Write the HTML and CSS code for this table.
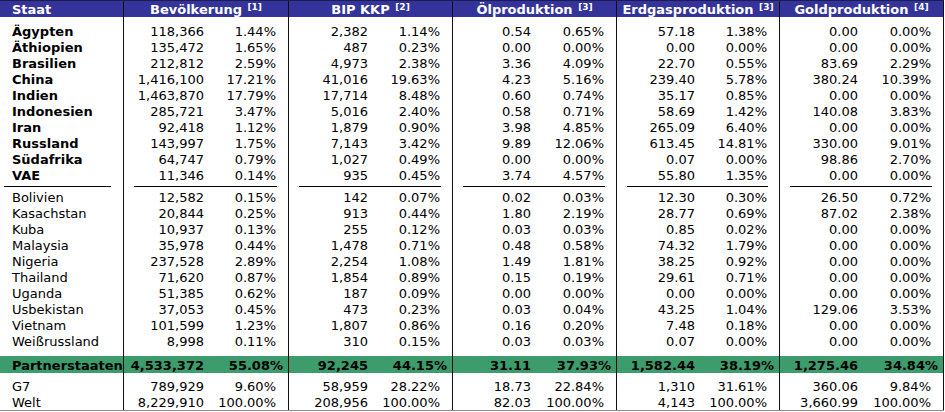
FILE: index.html
```html
<!DOCTYPE html>
<html lang="de">
<head>
<meta charset="utf-8">
<title>Partnerstaaten</title>
<link rel="stylesheet" href="styles.css">
</head>
<body>
<div class="table">
  <div class="row head">
    <span class="s">Staat</span>
    <span class="g">Bevölkerung <sup class="ref">[1]</sup></span>
    <span class="g">BIP KKP <sup class="ref">[2]</sup></span>
    <span class="g">Ölproduktion <sup class="ref">[3]</sup></span>
    <span class="g">Erdgasproduktion <sup class="ref">[3]</sup></span>
    <span class="g">Goldproduktion <sup class="ref">[4]</sup></span>
  </div>
  <div class="row gap gap-top"><span class="s"></span><span class="v"></span><span class="p"></span><span class="v"></span><span class="p"></span><span class="v"></span><span class="p"></span><span class="v"></span><span class="p"></span><span class="v"></span><span class="p"></span></div>

  <div class="row key"><span class="s">Ägypten</span><span class="v">118,366</span><span class="p">1.44%</span><span class="v">2,382</span><span class="p">1.14%</span><span class="v">0.54</span><span class="p">0.65%</span><span class="v">57.18</span><span class="p">1.38%</span><span class="v">0.00</span><span class="p">0.00%</span></div>
  <div class="row key"><span class="s">Äthiopien</span><span class="v">135,472</span><span class="p">1.65%</span><span class="v">487</span><span class="p">0.23%</span><span class="v">0.00</span><span class="p">0.00%</span><span class="v">0.00</span><span class="p">0.00%</span><span class="v">0.00</span><span class="p">0.00%</span></div>
  <div class="row key"><span class="s">Brasilien</span><span class="v">212,812</span><span class="p">2.59%</span><span class="v">4,973</span><span class="p">2.38%</span><span class="v">3.36</span><span class="p">4.09%</span><span class="v">22.70</span><span class="p">0.55%</span><span class="v">83.69</span><span class="p">2.29%</span></div>
  <div class="row key"><span class="s">China</span><span class="v">1,416,100</span><span class="p">17.21%</span><span class="v">41,016</span><span class="p">19.63%</span><span class="v">4.23</span><span class="p">5.16%</span><span class="v">239.40</span><span class="p">5.78%</span><span class="v">380.24</span><span class="p">10.39%</span></div>
  <div class="row key"><span class="s">Indien</span><span class="v">1,463,870</span><span class="p">17.79%</span><span class="v">17,714</span><span class="p">8.48%</span><span class="v">0.60</span><span class="p">0.74%</span><span class="v">35.17</span><span class="p">0.85%</span><span class="v">0.00</span><span class="p">0.00%</span></div>
  <div class="row key"><span class="s">Indonesien</span><span class="v">285,721</span><span class="p">3.47%</span><span class="v">5,016</span><span class="p">2.40%</span><span class="v">0.58</span><span class="p">0.71%</span><span class="v">58.69</span><span class="p">1.42%</span><span class="v">140.08</span><span class="p">3.83%</span></div>
  <div class="row key"><span class="s">Iran</span><span class="v">92,418</span><span class="p">1.12%</span><span class="v">1,879</span><span class="p">0.90%</span><span class="v">3.98</span><span class="p">4.85%</span><span class="v">265.09</span><span class="p">6.40%</span><span class="v">0.00</span><span class="p">0.00%</span></div>
  <div class="row key"><span class="s">Russland</span><span class="v">143,997</span><span class="p">1.75%</span><span class="v">7,143</span><span class="p">3.42%</span><span class="v">9.89</span><span class="p">12.06%</span><span class="v">613.45</span><span class="p">14.81%</span><span class="v">330.00</span><span class="p">9.01%</span></div>
  <div class="row key"><span class="s">Südafrika</span><span class="v">64,747</span><span class="p">0.79%</span><span class="v">1,027</span><span class="p">0.49%</span><span class="v">0.00</span><span class="p">0.00%</span><span class="v">0.07</span><span class="p">0.00%</span><span class="v">98.86</span><span class="p">2.70%</span></div>
  <div class="row key"><span class="s">VAE</span><span class="v">11,346</span><span class="p">0.14%</span><span class="v">935</span><span class="p">0.45%</span><span class="v">3.74</span><span class="p">4.57%</span><span class="v">55.80</span><span class="p">1.35%</span><span class="v">0.00</span><span class="p">0.00%</span></div>

  <div class="row sep"><span class="s"><i class="rule"></i></span><span class="v"><i class="rule"></i></span><span class="p"><i class="rule"></i></span><span class="v"><i class="rule"></i></span><span class="p"><i class="rule"></i></span><span class="v"><i class="rule"></i></span><span class="p"><i class="rule"></i></span><span class="v"><i class="rule"></i></span><span class="p"><i class="rule"></i></span><span class="v"><i class="rule"></i></span><span class="p"><i class="rule"></i></span></div>

  <div class="row"><span class="s">Bolivien</span><span class="v">12,582</span><span class="p">0.15%</span><span class="v">142</span><span class="p">0.07%</span><span class="v">0.02</span><span class="p">0.03%</span><span class="v">12.30</span><span class="p">0.30%</span><span class="v">26.50</span><span class="p">0.72%</span></div>
  <div class="row"><span class="s">Kasachstan</span><span class="v">20,844</span><span class="p">0.25%</span><span class="v">913</span><span class="p">0.44%</span><span class="v">1.80</span><span class="p">2.19%</span><span class="v">28.77</span><span class="p">0.69%</span><span class="v">87.02</span><span class="p">2.38%</span></div>
  <div class="row"><span class="s">Kuba</span><span class="v">10,937</span><span class="p">0.13%</span><span class="v">255</span><span class="p">0.12%</span><span class="v">0.03</span><span class="p">0.03%</span><span class="v">0.85</span><span class="p">0.02%</span><span class="v">0.00</span><span class="p">0.00%</span></div>
  <div class="row"><span class="s">Malaysia</span><span class="v">35,978</span><span class="p">0.44%</span><span class="v">1,478</span><span class="p">0.71%</span><span class="v">0.48</span><span class="p">0.58%</span><span class="v">74.32</span><span class="p">1.79%</span><span class="v">0.00</span><span class="p">0.00%</span></div>
  <div class="row"><span class="s">Nigeria</span><span class="v">237,528</span><span class="p">2.89%</span><span class="v">2,254</span><span class="p">1.08%</span><span class="v">1.49</span><span class="p">1.81%</span><span class="v">38.25</span><span class="p">0.92%</span><span class="v">0.00</span><span class="p">0.00%</span></div>
  <div class="row"><span class="s">Thailand</span><span class="v">71,620</span><span class="p">0.87%</span><span class="v">1,854</span><span class="p">0.89%</span><span class="v">0.15</span><span class="p">0.19%</span><span class="v">29.61</span><span class="p">0.71%</span><span class="v">0.00</span><span class="p">0.00%</span></div>
  <div class="row"><span class="s">Uganda</span><span class="v">51,385</span><span class="p">0.62%</span><span class="v">187</span><span class="p">0.09%</span><span class="v">0.00</span><span class="p">0.00%</span><span class="v">0.00</span><span class="p">0.00%</span><span class="v">0.00</span><span class="p">0.00%</span></div>
  <div class="row"><span class="s">Usbekistan</span><span class="v">37,053</span><span class="p">0.45%</span><span class="v">473</span><span class="p">0.23%</span><span class="v">0.03</span><span class="p">0.04%</span><span class="v">43.25</span><span class="p">1.04%</span><span class="v">129.06</span><span class="p">3.53%</span></div>
  <div class="row"><span class="s">Vietnam</span><span class="v">101,599</span><span class="p">1.23%</span><span class="v">1,807</span><span class="p">0.86%</span><span class="v">0.16</span><span class="p">0.20%</span><span class="v">7.48</span><span class="p">0.18%</span><span class="v">0.00</span><span class="p">0.00%</span></div>
  <div class="row"><span class="s">Weißrussland</span><span class="v">8,998</span><span class="p">0.11%</span><span class="v">310</span><span class="p">0.15%</span><span class="v">0.03</span><span class="p">0.03%</span><span class="v">0.07</span><span class="p">0.00%</span><span class="v">0.00</span><span class="p">0.00%</span></div>

  <div class="row gap gap-pre"><span class="s"></span><span class="v"></span><span class="p"></span><span class="v"></span><span class="p"></span><span class="v"></span><span class="p"></span><span class="v"></span><span class="p"></span><span class="v"></span><span class="p"></span></div>
  <div class="row total"><span class="s">Partnerstaaten</span><span class="v">4,533,372</span><span class="p">55.08%</span><span class="v">92,245</span><span class="p">44.15%</span><span class="v">31.11</span><span class="p">37.93%</span><span class="v">1,582.44</span><span class="p">38.19%</span><span class="v">1,275.46</span><span class="p">34.84%</span></div>
  <div class="row gap gap-post"><span class="s"></span><span class="v"></span><span class="p"></span><span class="v"></span><span class="p"></span><span class="v"></span><span class="p"></span><span class="v"></span><span class="p"></span><span class="v"></span><span class="p"></span></div>

  <div class="row"><span class="s">G7</span><span class="v">789,929</span><span class="p">9.60%</span><span class="v">58,959</span><span class="p">28.22%</span><span class="v">18.73</span><span class="p">22.84%</span><span class="v">1,310</span><span class="p">31.61%</span><span class="v">360.06</span><span class="p">9.84%</span></div>
  <div class="row"><span class="s">Welt</span><span class="v">8,229,910</span><span class="p">100.00%</span><span class="v">208,956</span><span class="p">100.00%</span><span class="v">82.03</span><span class="p">100.00%</span><span class="v">4,143</span><span class="p">100.00%</span><span class="v">3,660.99</span><span class="p">100.00%</span></div>
</div>
</body>
</html>
```

FILE: styles.css
```css
* {
  box-sizing: border-box;
}

body {
  margin: 0;
  background: #ffffff;
  color: #000000;
  font-family: Verdana, "DejaVu Sans", sans-serif;
  font-size: 13px;
}

.table {
  display: grid;
  width: 944px;
  grid-template-columns: 124px 80px 85px 79px 85px 78px 86px 78px 85px 78px 86px;
  border-top: 1px solid #1c1c50;
  border-bottom: 1px solid #8c8c8c;
}

.row {
  display: contents;
}

.row > span {
  height: 16px;
  padding-top: 1px;
  line-height: 16px;
  white-space: nowrap;
}

.s {
  padding-left: 12px;
  border-right: 1px solid #111111;
}

.v {
  text-align: right;
}

.p {
  text-align: right;
  padding-right: 12px;
  border-right: 1px solid #111111;
}

.head > span {
  background: #333399;
  color: #ffffff;
  font-weight: bold;
}

.head .g {
  grid-column: span 2;
  text-align: center;
  border-right: 1px solid #111111;
}

.ref {
  font-size: 9px;
  line-height: 0;
  vertical-align: 4px;
  margin-left: 1px;
}

.key .s {
  font-weight: bold;
}

.gap > span {
  padding-top: 0;
}

.gap.gap-top > span {
  height: 6px;
}

.gap.gap-pre > span {
  height: 7px;
}

.gap.gap-post > span {
  height: 5px;
}

.sep > span {
  height: 6px;
  padding-top: 3px;
}

.sep .s {
  padding-left: 4px;
  padding-right: 12px;
}

.sep .v {
  padding-left: 10px;
}

.sep .p {
  padding-right: 11px;
}

.rule {
  display: block;
  height: 1px;
  background: #000000;
}

.total > span {
  height: 17px;
  line-height: 17px;
  background: #3c9c6c;
  font-weight: bold;
}

.total .p {
  padding-right: 5px;
}
```
